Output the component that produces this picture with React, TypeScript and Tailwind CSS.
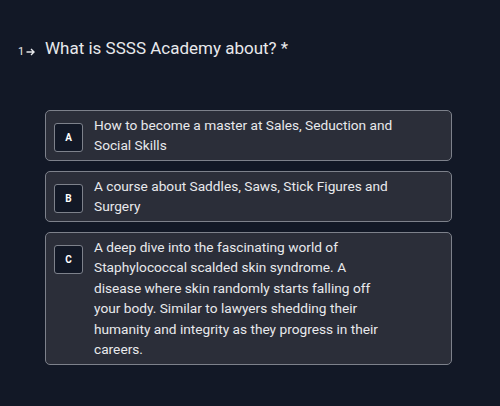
const options = [
  { key: 'A', text: 'How to become a master at Sales, Seduction and Social Skills' },
  { key: 'B', text: 'A course about Saddles, Saws, Stick Figures and Surgery' },
  {
    key: 'C',
    text: 'A deep dive into the fascinating world of Staphylococcal scalded skin syndrome. A disease where skin randomly starts falling off your body. Similar to lawyers shedding their humanity and integrity as they progress in their careers.',
  },
];

export default function App() {
  return (
    <div className="w-[500px] h-[406px] bg-[#121826] text-[#e8e9ec] font-['Roboto',sans-serif] overflow-hidden">
      <div className="pt-[36px] pl-[18px] flex items-center">
        <div className="w-[27px] pt-[8px] flex items-center text-[11px] text-[#e8e9ec] gap-[2px]">
          <span>1</span>
          <svg width="9" height="8" viewBox="0 0 9 8" fill="none" stroke="#e8e9ec" strokeWidth="1.4">
            <path d="M0.5 4h7.5M5 1l3 3-3 3" />
          </svg>
        </div>
        <h1 className="text-[17px] leading-[24px]">What is SSSS Academy about? *</h1>
      </div>

      <div className="mt-[49px] ml-[45px] w-[407px] flex flex-col gap-[10px]">
        {options.map((o) => (
          <div
            key={o.key}
            className="flex items-start gap-[11px] rounded-[5px] border border-[#7d818b] bg-[#2b2e39] pl-2 py-1"
          >
            <div className="mt-2 w-[29px] h-[29px] shrink-0 rounded-[3px] border border-[#7d818b] bg-[#121826] flex items-center justify-center text-[10px] font-bold text-white">
              {o.key}
            </div>
            <p className="w-[300px] text-[13.7px] leading-[20.5px] text-[#e8e9ec]">{o.text}</p>
          </div>
        ))}
      </div>
    </div>
  );
}
